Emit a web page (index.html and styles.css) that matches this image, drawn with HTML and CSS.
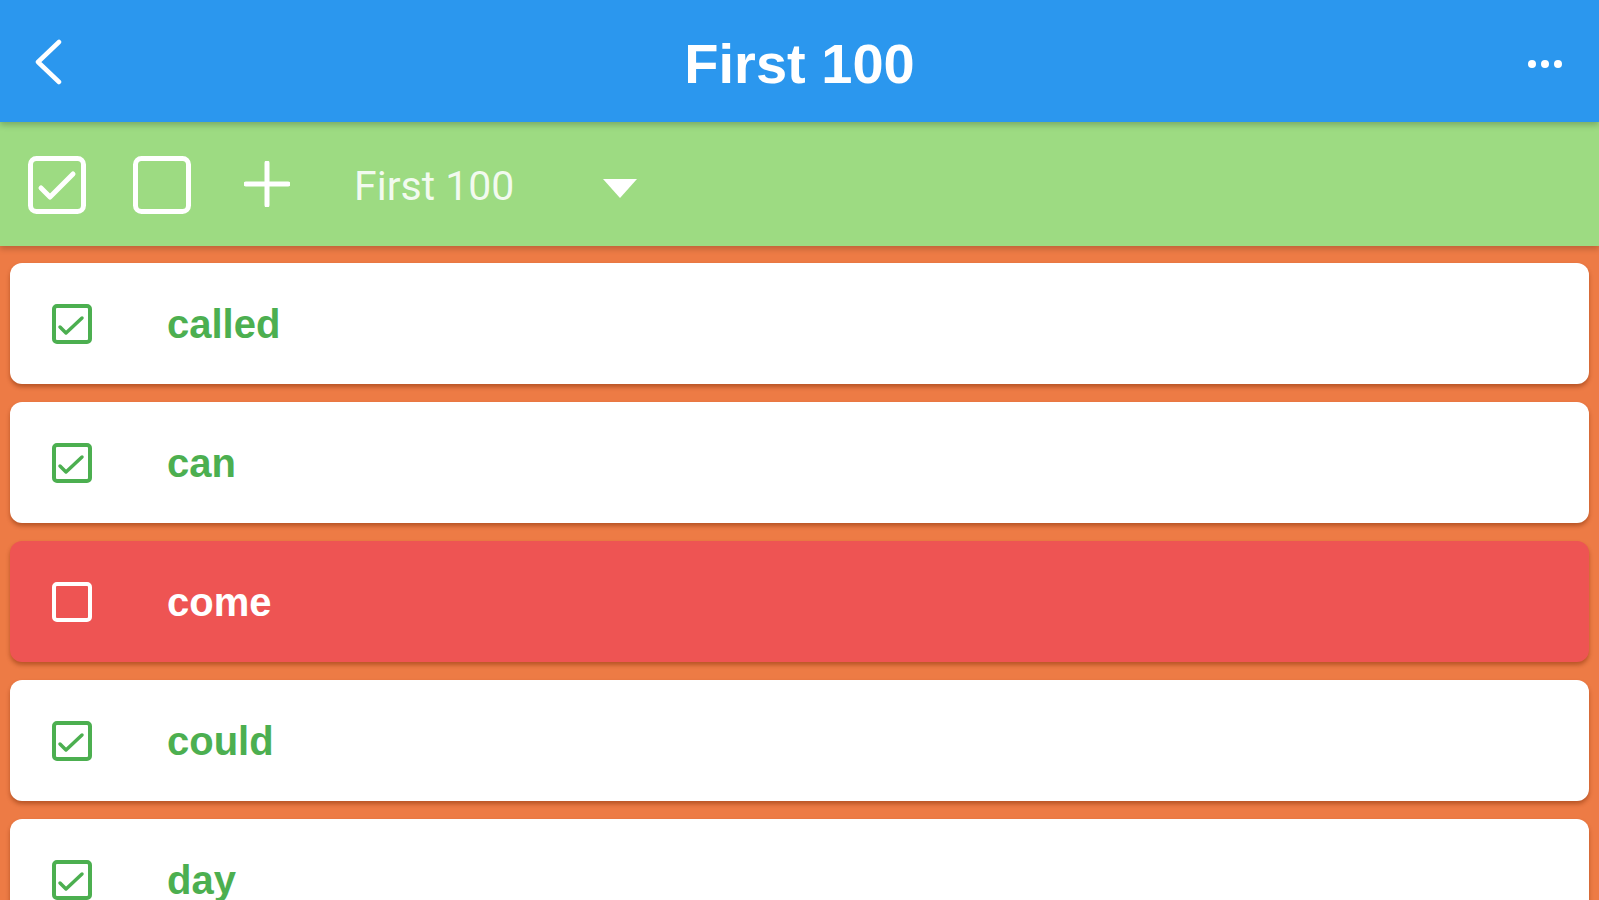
FILE: index.html
```html
<!DOCTYPE html>
<html lang="en">
<head>
<meta charset="utf-8">
<title>First 100</title>
<link rel="stylesheet" href="styles.css">
</head>
<body>
<div class="screen">
  <header class="appbar">
    <div class="appbar-side appbar-left">
      <svg class="back" width="28" height="46" viewBox="0 0 28 46"><polyline points="24,3 3,23 24,43" fill="none" stroke="#fff" stroke-width="4.5" stroke-linecap="round" stroke-linejoin="round"/></svg>
    </div>
    <h1 class="title">First 100</h1>
    <div class="appbar-side appbar-right">
      <span class="dot"></span><span class="dot"></span><span class="dot"></span>
    </div>
  </header>
  <div class="toolbar">
    <svg class="tool tool-check" width="58" height="58" viewBox="0 0 58 58"><rect x="2.5" y="2.5" width="53" height="53" rx="6" fill="none" stroke="#fff" stroke-width="5"/><polyline points="13,32 22,41 45,18" fill="none" stroke="#fff" stroke-width="5" stroke-linecap="round" stroke-linejoin="round"/></svg>
    <svg class="tool tool-box" width="58" height="58" viewBox="0 0 58 58"><rect x="2.5" y="2.5" width="53" height="53" rx="6" fill="none" stroke="#fff" stroke-width="5"/></svg>
    <svg class="tool tool-plus" width="46" height="46" viewBox="0 0 46 46"><path d="M23 2 V44 M2 23 H44" stroke="#fff" stroke-width="5" stroke-linecap="round"/></svg>
    <span class="list-name">First 100</span>
    <svg class="caret" width="34" height="19" viewBox="0 0 34 19"><polygon points="0,0 34,0 17,19" fill="#fff"/></svg>
  </div>
  <main class="list">
    <div class="card">
      <svg class="cb" width="40" height="40" viewBox="0 0 40 40"><rect x="2" y="2" width="36" height="36" rx="3" fill="none" stroke="#4caf50" stroke-width="4"/><polyline points="8,23 14,29 30,14" fill="none" stroke="#4caf50" stroke-width="3.5" stroke-linecap="round" stroke-linejoin="round"/></svg>
      <span class="word">called</span>
    </div>
    <div class="card">
      <svg class="cb" width="40" height="40" viewBox="0 0 40 40"><rect x="2" y="2" width="36" height="36" rx="3" fill="none" stroke="#4caf50" stroke-width="4"/><polyline points="8,23 14,29 30,14" fill="none" stroke="#4caf50" stroke-width="3.5" stroke-linecap="round" stroke-linejoin="round"/></svg>
      <span class="word">can</span>
    </div>
    <div class="card card-missed">
      <svg class="cb" width="40" height="40" viewBox="0 0 40 40"><rect x="2" y="2" width="36" height="36" rx="3" fill="none" stroke="#fff" stroke-width="4"/></svg>
      <span class="word">come</span>
    </div>
    <div class="card">
      <svg class="cb" width="40" height="40" viewBox="0 0 40 40"><rect x="2" y="2" width="36" height="36" rx="3" fill="none" stroke="#4caf50" stroke-width="4"/><polyline points="8,23 14,29 30,14" fill="none" stroke="#4caf50" stroke-width="3.5" stroke-linecap="round" stroke-linejoin="round"/></svg>
      <span class="word">could</span>
    </div>
    <div class="card">
      <svg class="cb" width="40" height="40" viewBox="0 0 40 40"><rect x="2" y="2" width="36" height="36" rx="3" fill="none" stroke="#4caf50" stroke-width="4"/><polyline points="8,23 14,29 30,14" fill="none" stroke="#4caf50" stroke-width="3.5" stroke-linecap="round" stroke-linejoin="round"/></svg>
      <span class="word">day</span>
    </div>
  </main>
</div>
</body>
</html>
```
FILE: styles.css
```css
* { box-sizing: border-box; }
html, body { margin: 0; padding: 0; }
body {
  width: 1599px;
  height: 900px;
  overflow: hidden;
  background: #ed7b45;
  font-family: "Liberation Sans", Arial, sans-serif;
}
.screen {
  display: flex;
  flex-direction: column;
  height: 900px;
}
.appbar {
  position: relative;
  z-index: 3;
  height: 122px;
  flex: 0 0 122px;
  background: #2b97ee;
  display: flex;
  align-items: center;
  box-shadow: 0 3px 6px rgba(0, 0, 0, 0.22);
}
.appbar-side {
  width: 160px;
  display: flex;
  align-items: center;
}
.appbar-left { padding-left: 35px; padding-top: 2px; }
.back { display: block; }
.appbar-right { justify-content: flex-end; padding-right: 37px; gap: 5px; padding-top: 5px; }
.dot {
  width: 8px;
  height: 8px;
  border-radius: 50%;
  background: #fff;
}
.title {
  flex: 1;
  margin: 0;
  padding-top: 6px;
  text-align: center;
  color: #fff;
  font-family: "Liberation Sans", Arial, sans-serif;
  font-weight: 700;
  font-size: 56px;
  line-height: 64px;
}
.toolbar {
  position: relative;
  z-index: 2;
  height: 124px;
  flex: 0 0 124px;
  background: #9ddb82;
  display: flex;
  align-items: center;
  padding-left: 28px;
  box-shadow: 0 3px 6px rgba(0, 0, 0, 0.2);
}
.tool { display: block; flex: none; }
.tool-check { margin-top: 2px; }
.tool-box { margin-left: 47px; margin-top: 2px; }
.tool-plus { margin-left: 53px; }
.list-name {
  margin-left: 64px;
  color: rgba(255, 255, 255, 0.88);
  font-family: Roboto, "Liberation Sans", sans-serif;
  font-size: 41px;
  padding-top: 4px;
}
.caret { margin-left: 89px; margin-top: 8px; display: block; }
.list {
  flex: 1;
  display: flex;
  flex-direction: column;
  gap: 18px;
  padding: 17px 10px 0 10px;
}
.card {
  height: 121px;
  flex: 0 0 121px;
  background: #fff;
  border-radius: 12px;
  display: flex;
  align-items: center;
  padding-left: 42px;
  box-shadow: 0 3px 4px rgba(120, 40, 0, 0.45);
}
.card-missed { background: #ee5453; }
.cb { display: block; flex: none; }
.word {
  margin-left: 75px;
  color: #4caf50;
  font-weight: 700;
  font-size: 40px;
  line-height: 46px;
}
.card-missed .word { color: #fff; }
```
